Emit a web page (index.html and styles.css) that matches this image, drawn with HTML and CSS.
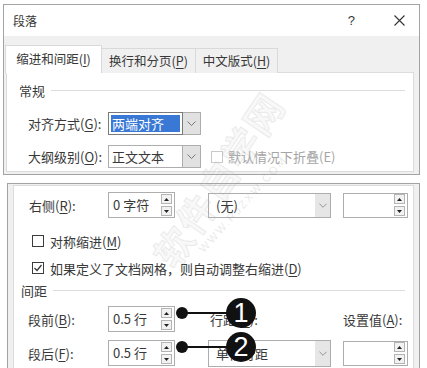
FILE: index.html
```html
<!DOCTYPE html>
<html lang="zh">
<head>
<meta charset="utf-8">
<link rel="stylesheet" href="styles.css">
</head>
<body>
<div class="dlg dlg-top">
  <div class="titlebar">
    <span class="title">段落</span>
    <span class="help">?</span>
    <svg class="close" width="11" height="11" viewBox="0 0 11 11"><path d="M0.5 0.5L10.5 10.5M10.5 0.5L0.5 10.5" stroke="#333" stroke-width="1.1" fill="none"/></svg>
  </div>
  <div class="tabs">
    <div class="tab active">缩进和间距(<u>I</u>)</div>
    <div class="tab t2">换行和分页(<u>P</u>)</div>
    <div class="tab t3">中文版式(<u>H</u>)</div>
  </div>
  <div class="panel panel-top">
    <div class="group g-top"><span>常规</span><i class="rule"></i></div>
    <div class="row row-a">
      <span class="label">对齐方式(<u>G</u>):</span>
      <div class="combo focus"><span class="sel">两端对齐</span></div>
      <div class="dd"><svg width="9" height="5" viewBox="0 0 9 5"><path d="M0.5 0.5L4.5 4.5L8.5 0.5" fill="none" stroke="#777"/></svg></div>
    </div>
    <div class="row row-b">
      <span class="label">大纲级别(<u>O</u>):</span>
      <div class="combo"><span class="val">正文文本</span></div>
      <div class="dd"><svg width="9" height="5" viewBox="0 0 9 5"><path d="M0.5 0.5L4.5 4.5L8.5 0.5" fill="none" stroke="#777"/></svg></div>
      <span class="cb cb-dis"></span><span class="dis-text">默认情况下折叠(E)</span>
    </div>
  </div>
</div>

<div class="dlg dlg-bottom">
  <div class="panel panel-bottom">
    <div class="row row-r">
      <span class="label lb2">右侧(<u>R</u>):</span>
      <div class="spin"><span class="sv">0 字符</span>
        <div class="sbtns">
          <span class="sb"><svg width="5" height="3" viewBox="0 0 5 3"><path d="M0 3L2.5 0L5 3Z" fill="#222"/></svg></span>
          <span class="sb"><svg width="5" height="3" viewBox="0 0 5 3"><path d="M0 0L2.5 3L5 0Z" fill="#222"/></svg></span>
        </div>
      </div>
      <div class="select"><span class="sv2">(无)</span>
        <div class="dd2"><svg width="9" height="5" viewBox="0 0 9 5"><path d="M0.5 0.5L4.5 4.5L8.5 0.5" fill="none" stroke="#888"/></svg></div>
      </div>
      <div class="spin small">
        <div class="sbtns">
          <span class="sb"><svg width="5" height="3" viewBox="0 0 5 3"><path d="M0 3L2.5 0L5 3Z" fill="#222"/></svg></span>
          <span class="sb"><svg width="5" height="3" viewBox="0 0 5 3"><path d="M0 0L2.5 3L5 0Z" fill="#222"/></svg></span>
        </div>
      </div>
    </div>

    <div class="cbrow cb1"><span class="cb"></span><span>对称缩进(<u>M</u>)</span></div>
    <div class="cbrow cb2"><span class="cb"><svg width="10" height="10" viewBox="0 0 10 10"><path d="M1.5 5L4 7.5L8.5 2" fill="none" stroke="#333" stroke-width="1.2"/></svg></span><span>如果定义了文档网格，则自动调整右缩进(<u>D</u>)</span></div>

    <div class="group g-bot"><span>间距</span><i class="rule"></i></div>

    <div class="row row-s1">
      <span class="label lb3">段前(<u>B</u>):</span>
      <div class="spin"><span class="sv">0.5 行</span>
        <div class="sbtns">
          <span class="sb"><svg width="5" height="3" viewBox="0 0 5 3"><path d="M0 3L2.5 0L5 3Z" fill="#222"/></svg></span>
          <span class="sb"><svg width="5" height="3" viewBox="0 0 5 3"><path d="M0 0L2.5 3L5 0Z" fill="#222"/></svg></span>
        </div>
      </div>
      <span class="lab-ls">行距(<u>N</u>):</span>
      <span class="lab-set">设置值(<u>A</u>):</span>
    </div>

    <div class="row row-s2">
      <span class="label lb3">段后(<u>F</u>):</span>
      <div class="spin"><span class="sv">0.5 行</span>
        <div class="sbtns">
          <span class="sb"><svg width="5" height="3" viewBox="0 0 5 3"><path d="M0 3L2.5 0L5 3Z" fill="#222"/></svg></span>
          <span class="sb"><svg width="5" height="3" viewBox="0 0 5 3"><path d="M0 0L2.5 3L5 0Z" fill="#222"/></svg></span>
        </div>
      </div>
      <div class="select"><span class="sv2">单倍行距</span>
        <div class="dd2"><svg width="9" height="5" viewBox="0 0 9 5"><path d="M0.5 0.5L4.5 4.5L8.5 0.5" fill="none" stroke="#888"/></svg></div>
      </div>
      <div class="spin small">
        <div class="sbtns">
          <span class="sb"><svg width="5" height="3" viewBox="0 0 5 3"><path d="M0 3L2.5 0L5 3Z" fill="#222"/></svg></span>
          <span class="sb"><svg width="5" height="3" viewBox="0 0 5 3"><path d="M0 0L2.5 3L5 0Z" fill="#222"/></svg></span>
        </div>
      </div>
    </div>
  </div>
</div>

<div class="watermark">
  <span class="wm-big">软件自学网</span>
  <span class="wm-small">WWW.RJZXW.COM</span>
</div>

<div class="callout c1"><i class="dot"></i><i class="line"></i><span class="num">1</span></div>
<div class="callout c2"><i class="dot"></i><i class="line"></i><span class="num">2</span></div>
</body>
</html>
```

FILE: styles.css
```css
* { box-sizing: border-box; }
html, body { margin: 0; }
body {
  background: #fff;
  font-family: "Noto Sans CJK SC", "Microsoft YaHei", sans-serif;
  font-size: 13px;
  color: #383838;
  width: 427px;
  height: 368px;
  overflow: hidden;
  position: relative;
}
u { text-decoration: underline; text-underline-offset: 2px; text-decoration-thickness: 1px; }

.dlg { background: #f0f0f0; border: 1px solid #a3a3a3; }
.dlg-top {
  margin: 4px 7px 0 3px;
  height: 171px;
  display: flex;
  flex-direction: column;
}

.titlebar {
  height: 31px;
  flex: none;
  background: #fff;
  display: flex;
  align-items: center;
  padding: 0 14px 0 9px;
}
.title { font-size: 12px; flex: 1; line-height: 1; }
.help { font-family: "Liberation Sans", sans-serif; font-size: 13px; margin-right: 39px; line-height: 1; }
.close { display: block; }

.tabs {
  margin-top: 9px;
  height: 28px;
  flex: none;
  display: flex;
  align-items: flex-end;
  padding-left: 1px;
  margin-bottom: -1px;
  position: relative;
  z-index: 1;
}
.tab {
  height: 25px;
  border: 1px solid #d9d9d9;
  border-bottom: none;
  background: #f0f0f0;
  font-size: 12.5px;
  display: flex;
  align-items: center;
  justify-content: center;
  line-height: 1;
}
.tab.active { height: 28px; width: 97px; background: #fff; }
.tab.t2 { width: 94px; border-left: none; }
.tab.t3 { width: 82px; border-left: none; }

.panel { background: #fff; border: 1px solid #dcdcdc; }
.panel-top { flex: 1; margin: 0 5px 2px 2px; }

.group { display: flex; align-items: center; height: 16px; line-height: 1; }
.rule { flex: 1; height: 1px; background: #dcdcdc; margin: 0 8px 0 6px; }
.g-top { margin-top: 9px; padding-left: 12px; }
.g-bot { margin-top: 6px; padding-left: 7px; }

.row { display: flex; align-items: center; }
.label { width: 80px; flex: none; line-height: 1; }
.row-a { margin-top: 14px; height: 23px; padding-left: 21px; }
.row-b { margin-top: 10px; height: 23px; padding-left: 21px; }

.combo {
  width: 75px; height: 23px;
  border: 1px solid #adadad;
  background: #fff;
  display: flex; align-items: center;
  padding-left: 3px;
  line-height: 1;
}
.combo.focus { border-color: #7a7a7a; padding: 2px; }
.sel {
  flex: 1; height: 17px;
  background: #3a78d6;
  color: #fff;
  display: flex; align-items: center;
  padding-left: 1px;
}
.dd {
  width: 18px; height: 23px;
  border: 1px solid #adadad;
  border-left: none;
  background: #e1e1e1;
  display: flex; align-items: center; justify-content: center;
}
.dd svg { display: block; }
.cb {
  width: 12px; height: 12px; flex: none;
  border: 1px solid #3c3c3c;
  background: #fff;
  display: flex; align-items: center; justify-content: center;
}
.cb svg { display: block; }
.cb-dis { border-color: #c9c9c9; margin-left: 10px; }
.dis-text { color: #a6a6a6; margin-left: 5px; line-height: 1; }

.dlg-bottom {
  margin: 8px 7px 0 7px;
  height: 200px;
  padding: 1px 5px 0 5px;
}
.panel-bottom { height: 200px; }

.row-r { margin-top: 6px; height: 26px; padding-left: 15px; }
.lb2 { width: 79px; }
.lb3 { width: 80px; }

.spin {
  width: 67px; height: 26px; flex: none;
  border: 1px solid #adadad;
  background: #fff;
  display: flex; align-items: center;
  padding: 0 1px 0 4px;
  line-height: 1.2;
}
.sv { flex: 1; white-space: nowrap; }
.sbtns { display: flex; flex-direction: column; gap: 2px; margin-right: 1px; }
.sb {
  width: 11px; height: 10px;
  border: 1px solid #b4b4b4;
  background: #f2f2f2;
  display: flex; align-items: center; justify-content: center;
}
.sb svg { display: block; }
.spin.small { width: 65px; height: 25px; margin-left: 12px; justify-content: flex-end; }

.select {
  width: 123px; height: 25px; flex: none;
  margin-left: 33px;
  border: 1px solid #adadad;
  background: #fff;
  display: flex; align-items: center;
  line-height: 1;
}
.sv2 { flex: 1; padding-left: 7px; }
.dd2 {
  width: 15px; height: 100%;
  background: #e6e6e6;
  display: flex; align-items: center; justify-content: center;
}
.dd2 svg { display: block; width: 8px; }

.cbrow { display: flex; align-items: center; height: 16px; padding-left: 18px; line-height: 1; gap: 6px; }
.cb1 { margin-top: 15px; }
.cb2 { margin-top: 11px; }

.row-s1 { margin-top: 8px; height: 26px; padding-left: 14px; }
.row-s2 { margin-top: 8px; height: 26px; padding-left: 14px; }
.lab-ls { margin-left: 35px; width: 133px; line-height: 1; }
.lab-set { line-height: 1; }
.row-s2 .select { height: 27px; }
.row-s2 .spin.small { height: 25px; }

/* faint watermark laid over the dialogs */
.watermark {
  position: absolute;
  left: 0; top: 0; width: 427px; height: 368px;
  pointer-events: none;
}
.wm-big {
  position: absolute;
  left: 118px; top: 160px;
  width: 200px;
  font-size: 38px;
  font-weight: 700;
  letter-spacing: 2px;
  white-space: nowrap;
  color: rgba(200, 200, 200, 0.12);
  -webkit-text-stroke: 1px rgba(170, 170, 170, 0.22);
  transform: rotate(-56deg);
  line-height: 1;
}
.wm-small {
  position: absolute;
  left: 180px; top: 198px;
  font-family: "Liberation Sans", sans-serif;
  font-size: 11px;
  letter-spacing: 2px;
  color: rgba(160, 160, 160, 0.25);
  transform: rotate(-48deg);
  white-space: nowrap;
}

/* numbered callouts */
.callout { position: absolute; left: 176px; width: 84px; height: 30px; }
.c1 { top: 298px; }
.c2 { top: 332px; }
.dot {
  position: absolute; left: 0; top: 9px;
  width: 12px; height: 12px; border-radius: 50%;
  background: #111;
}
.line {
  position: absolute; left: 6px; top: 14px;
  width: 52px; height: 2px; background: #111;
}
.num {
  position: absolute; left: 50px; top: 0;
  width: 30px; height: 30px; border-radius: 50%;
  background: #111;
  color: #fff;
  font-family: "Liberation Sans", sans-serif;
  font-size: 27px;
  line-height: 30px;
  text-align: center;
}
```
